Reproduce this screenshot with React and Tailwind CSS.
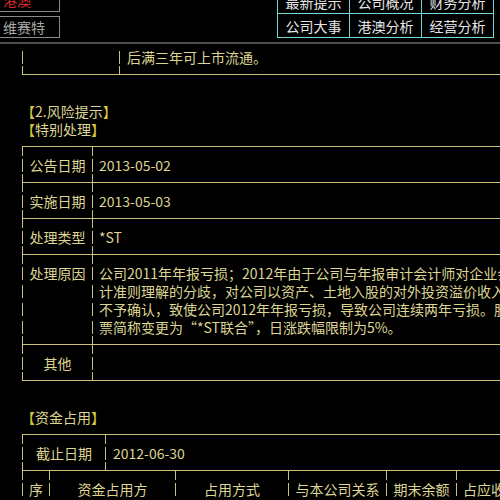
import React from "react";

const FONT = { fontFamily: '"Noto Sans CJK SC", "Noto Sans", sans-serif' };

function Bar() {
  return <span className="w-px h-[13px] bg-[#c9c27a] shrink-0" />;
}

// one text line of the F10 table, cells start with a vertical bar
function Row({ cells }) {
  return (
    <div className="flex h-[18px] pl-[22px] items-center whitespace-nowrap">
      {cells.map((c, i) => (
        <div key={i} className={`flex items-center h-full shrink-0 ${c.cls}`}>
          <Bar />
          <span className={`flex-1 min-w-0 overflow-hidden ${c.center ? "text-center" : ""} ${c.pad || ""}`}>
            {c.text}
          </span>
        </div>
      ))}
    </div>
  );
}

// horizontal rule line with junctions
function Sep({ cols }) {
  return (
    <div className="flex h-[18px] pl-[22px]">
      {cols.map((c, i) => (
        <div key={i} className={`flex flex-col h-full shrink-0 ${c.cls}`}>
          <div className={`h-[9px] border-b border-[#c9c27a] ${c.up ? "border-l" : ""}`} />
          <div className={`h-[9px] border-[#c9c27a] ${c.down ? "border-l" : ""}`} />
        </div>
      ))}
    </div>
  );
}

function Heading({ children }) {
  return (
    <div className="h-[18px] pl-[21px] flex items-center whitespace-nowrap">
      <span className="text-[#dcc83c]">【</span>
      <span>{children}</span>
      <span className="text-[#dcc83c]">】</span>
    </div>
  );
}

const Blank = () => <div className="h-[18px]" />;

export default function App() {
  const bLabel = (text) => [
    { cls: "w-[70px]", text, center: true },
    { cls: "flex-1", text: "", pad: "pl-[6px]" },
  ];
  const bRow = (label, text) => (
    <Row
      cells={[
        { cls: "w-[70px]", text: label, center: true },
        { cls: "flex-1", text, pad: "pl-[6px]" },
      ]}
    />
  );
  const bMid = [
    { cls: "w-[70px]", up: true, down: true },
    { cls: "flex-1", up: true, down: true },
  ];

  return (
    <div className="w-[500px] h-[500px] overflow-hidden bg-black text-[14px] leading-[18px]" style={FONT}>
      {/* header */}
      <div className="h-[42px] flex">
        <div className="w-[61px] ml-[-1px] flex flex-col shrink-0">
          <div className="h-[24px] mt-[-12px] border border-[#8a8a8a] pl-[3px] flex items-center text-[#dc2a2a]">
            港澳
          </div>
          <div className="h-[22px] mt-[4px] border border-[#8a8a8a] pl-[3px] flex items-center text-[#a9a9a9]">
            维赛特
          </div>
        </div>
        <div className="ml-auto mr-[6px] mt-[-11px] grid grid-cols-[72px_72px_72px] border-l border-t border-[#74d6d6] text-[#e6e6e6] self-start">
          {["最新提示", "公司概况", "财务分析", "公司大事", "港澳分析", "经营分析"].map((t) => (
            <div key={t} className="h-[24px] border-r border-b border-[#74d6d6] flex items-center justify-center">
              {t}
            </div>
          ))}
        </div>
      </div>
      <div className="h-[2px] bg-[#4e4e4e]" />

      {/* content */}
      <div className="pt-[4px] text-[#ddd593]">
        <Row
          cells={[
            { cls: "w-[97px]", text: "" },
            { cls: "flex-1", text: "后满三年可上市流通。", pad: "pl-[7px]" },
          ]}
        />
        <Sep
          cols={[
            { cls: "w-[97px]", up: true },
            { cls: "flex-1", up: true },
          ]}
        />
        <Blank />
        <Heading>2.风险提示</Heading>
        <Heading>特别处理</Heading>
        <Sep
          cols={[
            { cls: "w-[70px]", down: true },
            { cls: "flex-1", down: true },
          ]}
        />
        {bRow("公告日期", "2013-05-02")}
        <Sep cols={bMid} />
        {bRow("实施日期", "2013-05-03")}
        <Sep cols={bMid} />
        {bRow("处理类型", "*ST")}
        <Sep cols={bMid} />
        {bRow("处理原因", "公司2011年年报亏损；2012年由于公司与年报审计会计师对企业会计准则")}
        {bRow("", "计准则理解的分歧，对公司以资产、土地入股的对外投资溢价收入")}
        {bRow("", "不予确认，致使公司2012年年报亏损，导致公司连续两年亏损。股")}
        {bRow("", "票简称变更为“*ST联合”，日涨跌幅限制为5%。")}
        <Sep cols={bMid} />
        <Row cells={bLabel("其他")} />
        <Sep
          cols={[
            { cls: "w-[70px]", up: true },
            { cls: "flex-1", up: true },
          ]}
        />
        <Blank />
        <Heading>资金占用</Heading>
        <Sep
          cols={[
            { cls: "w-[83px]", down: true },
            { cls: "flex-1", down: true },
          ]}
        />
        <Row
          cells={[
            { cls: "w-[83px]", text: "截止日期", center: true },
            { cls: "flex-1", text: "2012-06-30", pad: "pl-[7px]" },
          ]}
        />
        <Sep
          cols={[
            { cls: "w-[27px]", up: true, down: true },
            { cls: "w-[56px]", down: true },
            { cls: "w-[70px]", up: true },
            { cls: "w-[113px]", down: true },
            { cls: "w-[98px]", down: true },
            { cls: "w-[70px]", down: true },
            { cls: "flex-1", down: true },
          ]}
        />
        <Row
          cells={[
            { cls: "w-[27px]", text: "序", center: true },
            { cls: "w-[126px]", text: "资金占用方", center: true },
            { cls: "w-[113px]", text: "占用方式", center: true },
            { cls: "w-[98px]", text: "与本公司关系", center: true },
            { cls: "w-[70px]", text: "期末余额", center: true },
            { cls: "flex-1", text: "占应收款比例(%)", pad: "pl-[6px]" },
          ]}
        />
      </div>
    </div>
  );
}
